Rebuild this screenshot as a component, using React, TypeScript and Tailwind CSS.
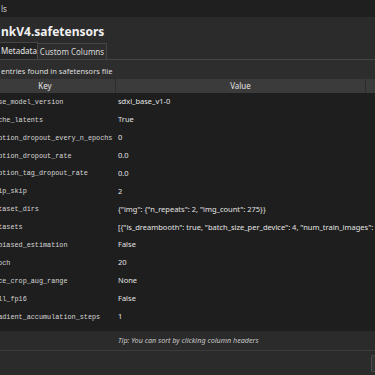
import React from "react";

const rows: [string, string][] = [
  ["base_model_version", "sdxl_base_v1-0"],
  ["cache_latents", "True"],
  ["caption_dropout_every_n_epochs", "0"],
  ["caption_dropout_rate", "0.0"],
  ["caption_tag_dropout_rate", "0.0"],
  ["clip_skip", "2"],
  ["dataset_dirs", '{"img": {"n_repeats": 2, "img_count": 275}}'],
  [
    "datasets",
    '[{"is_dreambooth": true, "batch_size_per_device": 4, "num_train_images": 550...',
  ],
  ["debiased_estimation", "False"],
  ["epoch", "20"],
  ["face_crop_aug_range", "None"],
  ["full_fp16", "False"],
  ["gradient_accumulation_steps", "1"],
];

export default function App() {
  return (
    <div
      className="w-[375px] h-[375px] overflow-hidden bg-[#2b2b2b] text-[#dcdcdc] flex flex-col"
      style={{ fontFamily: '"Noto Sans", "Open Sans", sans-serif' }}
    >
      {/* title bar */}
      <div className="h-[17px] bg-[#1f1f1f] flex items-center pl-[1px] text-[8px] text-[#cfcfcf]">
        ls
      </div>

      {/* file name */}
      <div className="h-[25px] flex items-center pl-[1px] text-[12px] font-bold text-[#f0f0f0] pt-[5px]">
        nkV4.safetensors
      </div>

      {/* tabs */}
      <div className="h-[17px] flex items-end text-[8px]">
        <div className="h-[17px] w-[38px] flex items-center pl-[1px] bg-[#222222] border-r border-t border-[#454545] text-[#e6e6e6]">
          Metadata
        </div>
        <div className="h-[16px] w-[69px] flex items-center justify-center bg-[#2d2d2d] border-t border-r border-[#454545] text-[#d8d8d8]">
          Custom Columns
        </div>
      </div>

      <div className="flex-1 flex flex-col border-t border-[#454545] bg-[#2d2d2d]">
        <div className="h-[19px] flex items-center pl-[1px] pt-[4px] text-[7.5px] text-[#dedede]">
          entries found in safetensors file
        </div>

        {/* table */}
        <div className="flex flex-col bg-[#1e1e1e] h-[252px]">
          <div className="h-[14px] flex bg-[#3b3b3b] text-[8px] text-[#e2e2e2] ml-[-25px]">
            <div className="w-[141px] flex items-center justify-center border-r border-[#2c2c2c]">
              Key
            </div>
            <div className="w-[250px] flex items-center justify-center border-r border-[#2c2c2c]">
              Value
            </div>
            <div className="flex-1" />
          </div>
          {rows.map(([k, v]) => (
            <div key={k} className="h-[17.9px] flex items-center ml-[-10px]">
              <div
                className="w-[128px] shrink-0 text-[6.8px] text-[#d6d6d6] whitespace-nowrap"
                style={{ fontFamily: '"Liberation Mono", monospace' }}
              >
                {k}
              </div>
              <div className="text-[7.5px] text-[#e4e4e4] whitespace-nowrap">
                {v}
              </div>
            </div>
          ))}
        </div>

        {/* tip */}
        <div className="h-[19px] flex items-center pl-[118px] italic text-[7.2px] text-[#c8c8c8] bg-[#2b2b2b]">
          Tip: You can sort by clicking column headers
        </div>

        <div className="flex-1 border-t border-[#3c3c3c] bg-[#2b2b2b] flex justify-end pt-[4px]">
          <div className="w-[4px] h-[17px] border border-r-0 border-[#4a4a4a] rounded-l-[2px] bg-[#333333]" />
        </div>
      </div>
    </div>
  );
}
